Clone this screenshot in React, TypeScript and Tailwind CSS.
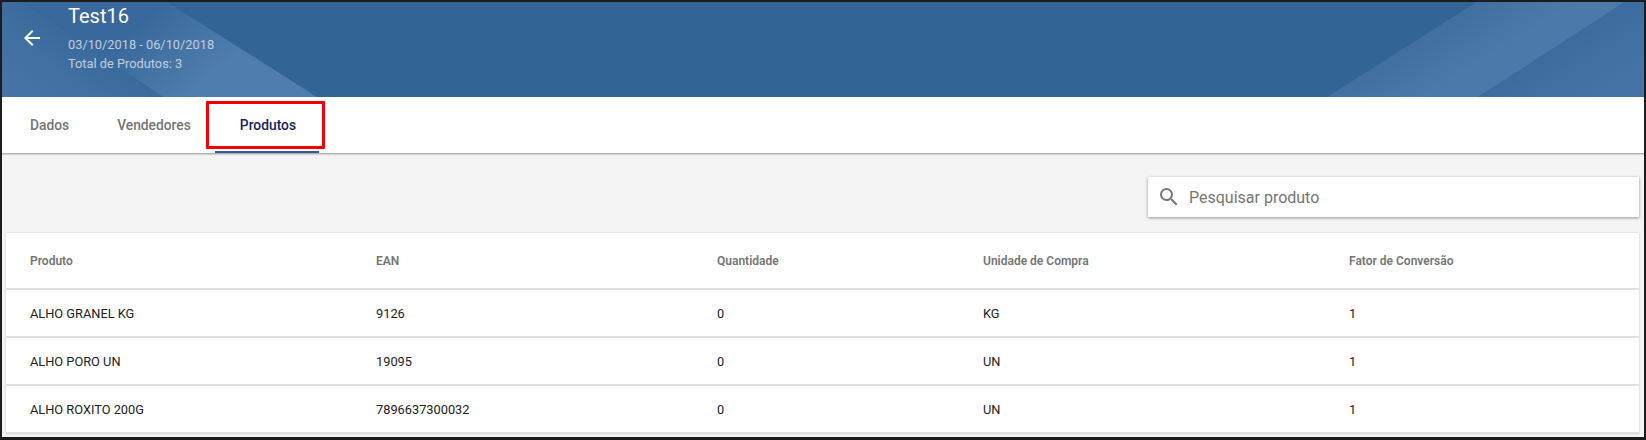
import { MdArrowBack, MdSearch } from "react-icons/md";

const rows = [
  ["ALHO GRANEL KG", "9126", "0", "KG", "1"],
  ["ALHO PORO UN", "19095", "0", "UN", "1"],
  ["ALHO ROXITO 200G", "7896637300032", "0", "UN", "1"],
];

const columns = ["Produto", "EAN", "Quantidade", "Unidade de Compra", "Fator de Conversão"];

const HeaderArt = () => (
  <svg className="absolute inset-0 w-full h-full" viewBox="0 0 1642 95" preserveAspectRatio="none">
    <defs>
      <linearGradient id="leftWedge" gradientUnits="userSpaceOnUse" x1="30" y1="95" x2="73" y2="32">
        <stop offset="0" stopColor="#4674a6" />
        <stop offset="1" stopColor="#3a6a9c" />
      </linearGradient>
      <linearGradient id="leftBand" gradientUnits="userSpaceOnUse" x1="150" y1="10" x2="210" y2="75">
        <stop offset="0" stopColor="#39699c" />
        <stop offset="1" stopColor="#4f7dad" />
      </linearGradient>
      <linearGradient id="rightBand" gradientUnits="userSpaceOnUse" x1="1400" y1="47" x2="1428" y2="92">
        <stop offset="0" stopColor="#416f9f" />
        <stop offset="1" stopColor="#4b79aa" />
      </linearGradient>
      <linearGradient id="rightWedge" gradientUnits="userSpaceOnUse" x1="1550" y1="47" x2="1588" y2="107">
        <stop offset="0" stopColor="#3c6c9f" />
        <stop offset="1" stopColor="#4674a6" />
      </linearGradient>
    </defs>
    <polygon points="0,0 20,0 161,95 0,95" fill="url(#leftWedge)" />
    <polygon points="20,0 165,0 315,95 161,95" fill="url(#leftBand)" />
    <polygon points="1325,95 1475,0 1623,0 1476,95" fill="url(#rightBand)" />
    <polygon points="1476,95 1623,0 1642,0 1642,95" fill="url(#rightWedge)" />
  </svg>
);

export default function App() {
  return (
    <div className="w-[1646px] h-[440px] overflow-hidden border-t-2 border-x-2 border-b-[3px] border-[#1c1c1c] bg-[#f4f4f4] font-['Roboto',sans-serif] relative">
      <header className="relative h-[95px] bg-[#336496] overflow-hidden text-white">
        <HeaderArt />
        <div className="relative flex">
          <div className="w-[66px] pl-[18px] pt-[24px]">
            <MdArrowBack size={24} />
          </div>
          <div className="flex flex-col">
            <span className="text-[20px] leading-[28px]">Test16</span>
            <span className="text-[12.8px] leading-[19px] mt-[5px] text-[#c0cfdf]">03/10/2018 - 06/10/2018</span>
            <span className="text-[12.8px] leading-[19px] text-[#c0cfdf]">Total de Produtos: 3</span>
          </div>
        </div>
      </header>

      <nav className="h-[57px] bg-white border-b border-[#b0b0b0] shadow-[0_1px_1px_rgba(0,0,0,0.12)] flex pl-1 text-[13.8px] font-medium">
        <div className="px-6 pt-[18px] text-[#757575]">Dados</div>
        <div className="px-6 pt-[18px] text-[#757575]">Vendedores</div>
        <div className="pl-[25px] pr-[23px] pt-[18px] text-[#14245c] border-b-2 border-[#2a5ea0] h-[56px]">Produtos</div>
      </nav>

      <main className="pl-1 pr-[5px] pt-[23px]">
        <div className="flex justify-end">
          <div className="w-[491px] h-10 bg-white flex items-center pl-[9px] gap-2 shadow-[0_1px_3px_rgba(0,0,0,0.4)]">
            <MdSearch size={24} className="text-[#757575]" />
            <span className="text-base text-[#757575] pt-[2px]">Pesquisar produto</span>
          </div>
        </div>
        <section className="mt-4 bg-white shadow-[0_0_2px_rgba(0,0,0,0.15)] text-[12.8px]">
          <div className="grid grid-cols-[346px_341px_266px_366px_1fr] px-6 h-[57px] items-center border-b-2 border-[#e0e0e0] text-xs font-semibold text-[#757575]">
            {columns.map((c) => (
              <span key={c}>{c}</span>
            ))}
          </div>
          {rows.map((row) => (
            <div key={row[0]} className="grid grid-cols-[346px_341px_266px_366px_1fr] px-6 pt-[2px] h-12 items-center border-b-2 border-[#e0e0e0] text-[#212121]">
              {row.map((cell, i) => (
                <span key={i}>{cell}</span>
              ))}
            </div>
          ))}
        </section>
      </main>

      {/* red annotation over the active tab */}
      <div className="absolute left-[204px] top-[99px] w-[119px] h-[48px] border-[3px] border-[#f50000] rounded-[1px]" />
    </div>
  );
}
